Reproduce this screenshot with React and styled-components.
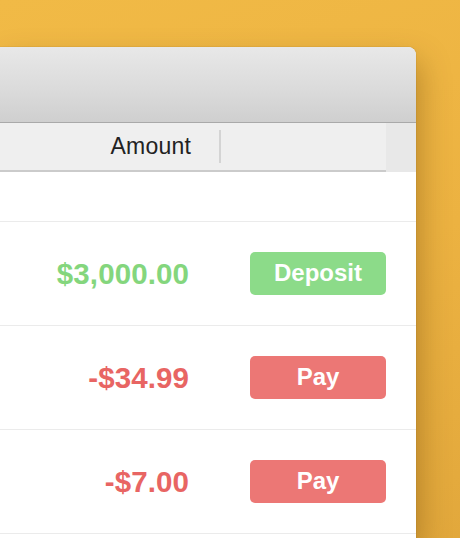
import React from "react";
import styled, { createGlobalStyle } from "styled-components";

const Global = createGlobalStyle`
  html, body { margin: 0; padding: 0; }
  body {
    width: 460px;
    height: 538px;
    overflow: hidden;
    background: linear-gradient(160deg, #f1ba46 0%, #ecb241 55%, #e2a83c 100%);
    font-family: "Helvetica Neue", "Liberation Sans", Arial, sans-serif;
  }
`;

const Window = styled.div`
  margin-top: 47px;
  width: 416px;
  height: 491px;
  background: #fff;
  border-radius: 0 8px 0 0;
  overflow: hidden;
  box-shadow: 0 0 1px rgba(80, 50, 0, 0.55), 4px 14px 30px rgba(90, 55, 0, 0.35);
`;

const TitleBar = styled.div`
  height: 75px;
  background: linear-gradient(180deg, #e8e8e8 0%, #dadada 60%, #cfcfcf 100%);
  border-bottom: 1px solid #a9a9a9;
`;

const HeaderRow = styled.div`
  display: flex;
  height: 49px;
`;

const HeaderMain = styled.div`
  width: 386px;
  display: flex;
  align-items: center;
  background: #efefef;
  border-bottom: 2px solid #cbcbcb;
  box-sizing: border-box;
`;

const HeaderFiller = styled.div`
  flex: 1;
  background: #e8e8e8;
`;

const HeaderLabel = styled.div`
  width: 191px;
  text-align: right;
  font-size: 23px;
  color: #222;
  letter-spacing: 0.2px;
  padding-bottom: 1px;
`;

const Divider = styled.div`
  margin-left: 28px;
  width: 2px;
  height: 33px;
  background: #d4d4d4;
`;

const Row = styled.div`
  display: flex;
  align-items: center;
  flex-shrink: 0;
  height: ${(p) => p.$h}px;
  border-bottom: 1px solid #ebebeb;
`;

const Amount = styled.div`
  width: 189px;
  text-align: right;
  font-size: 29.5px;
  font-weight: 700;
  color: ${(p) => (p.$positive ? "#84d67d" : "#e86563")};
  letter-spacing: 0.1px;
`;

const ActionButton = styled.div`
  margin-left: 61px;
  width: 136px;
  height: 43px;
  border-radius: 5px;
  background: ${(p) => (p.$positive ? "#8cdb89" : "#ec7775")};
  color: #fff;
  font-size: 24px;
  font-weight: 700;
  display: flex;
  align-items: center;
  justify-content: center;
  padding-bottom: 2px;
  box-sizing: border-box;
`;

const rows = [
  { amount: "$3,000.00", positive: true, label: "Deposit" },
  { amount: "-$34.99", positive: false, label: "Pay" },
  { amount: "-$7.00", positive: false, label: "Pay" },
];

export default function App() {
  return (
    <>
      <Global />
      <Window>
        <TitleBar />
        <HeaderRow>
          <HeaderMain>
            <HeaderLabel>Amount</HeaderLabel>
            <Divider />
          </HeaderMain>
          <HeaderFiller />
        </HeaderRow>
        <Row $h={49} />
        {rows.map((r, i) => (
          <Row key={i} $h={103}>
            <Amount $positive={r.positive}>{r.amount}</Amount>
            <ActionButton $positive={r.positive}>{r.label}</ActionButton>
          </Row>
        ))}
      </Window>
    </>
  );
}
